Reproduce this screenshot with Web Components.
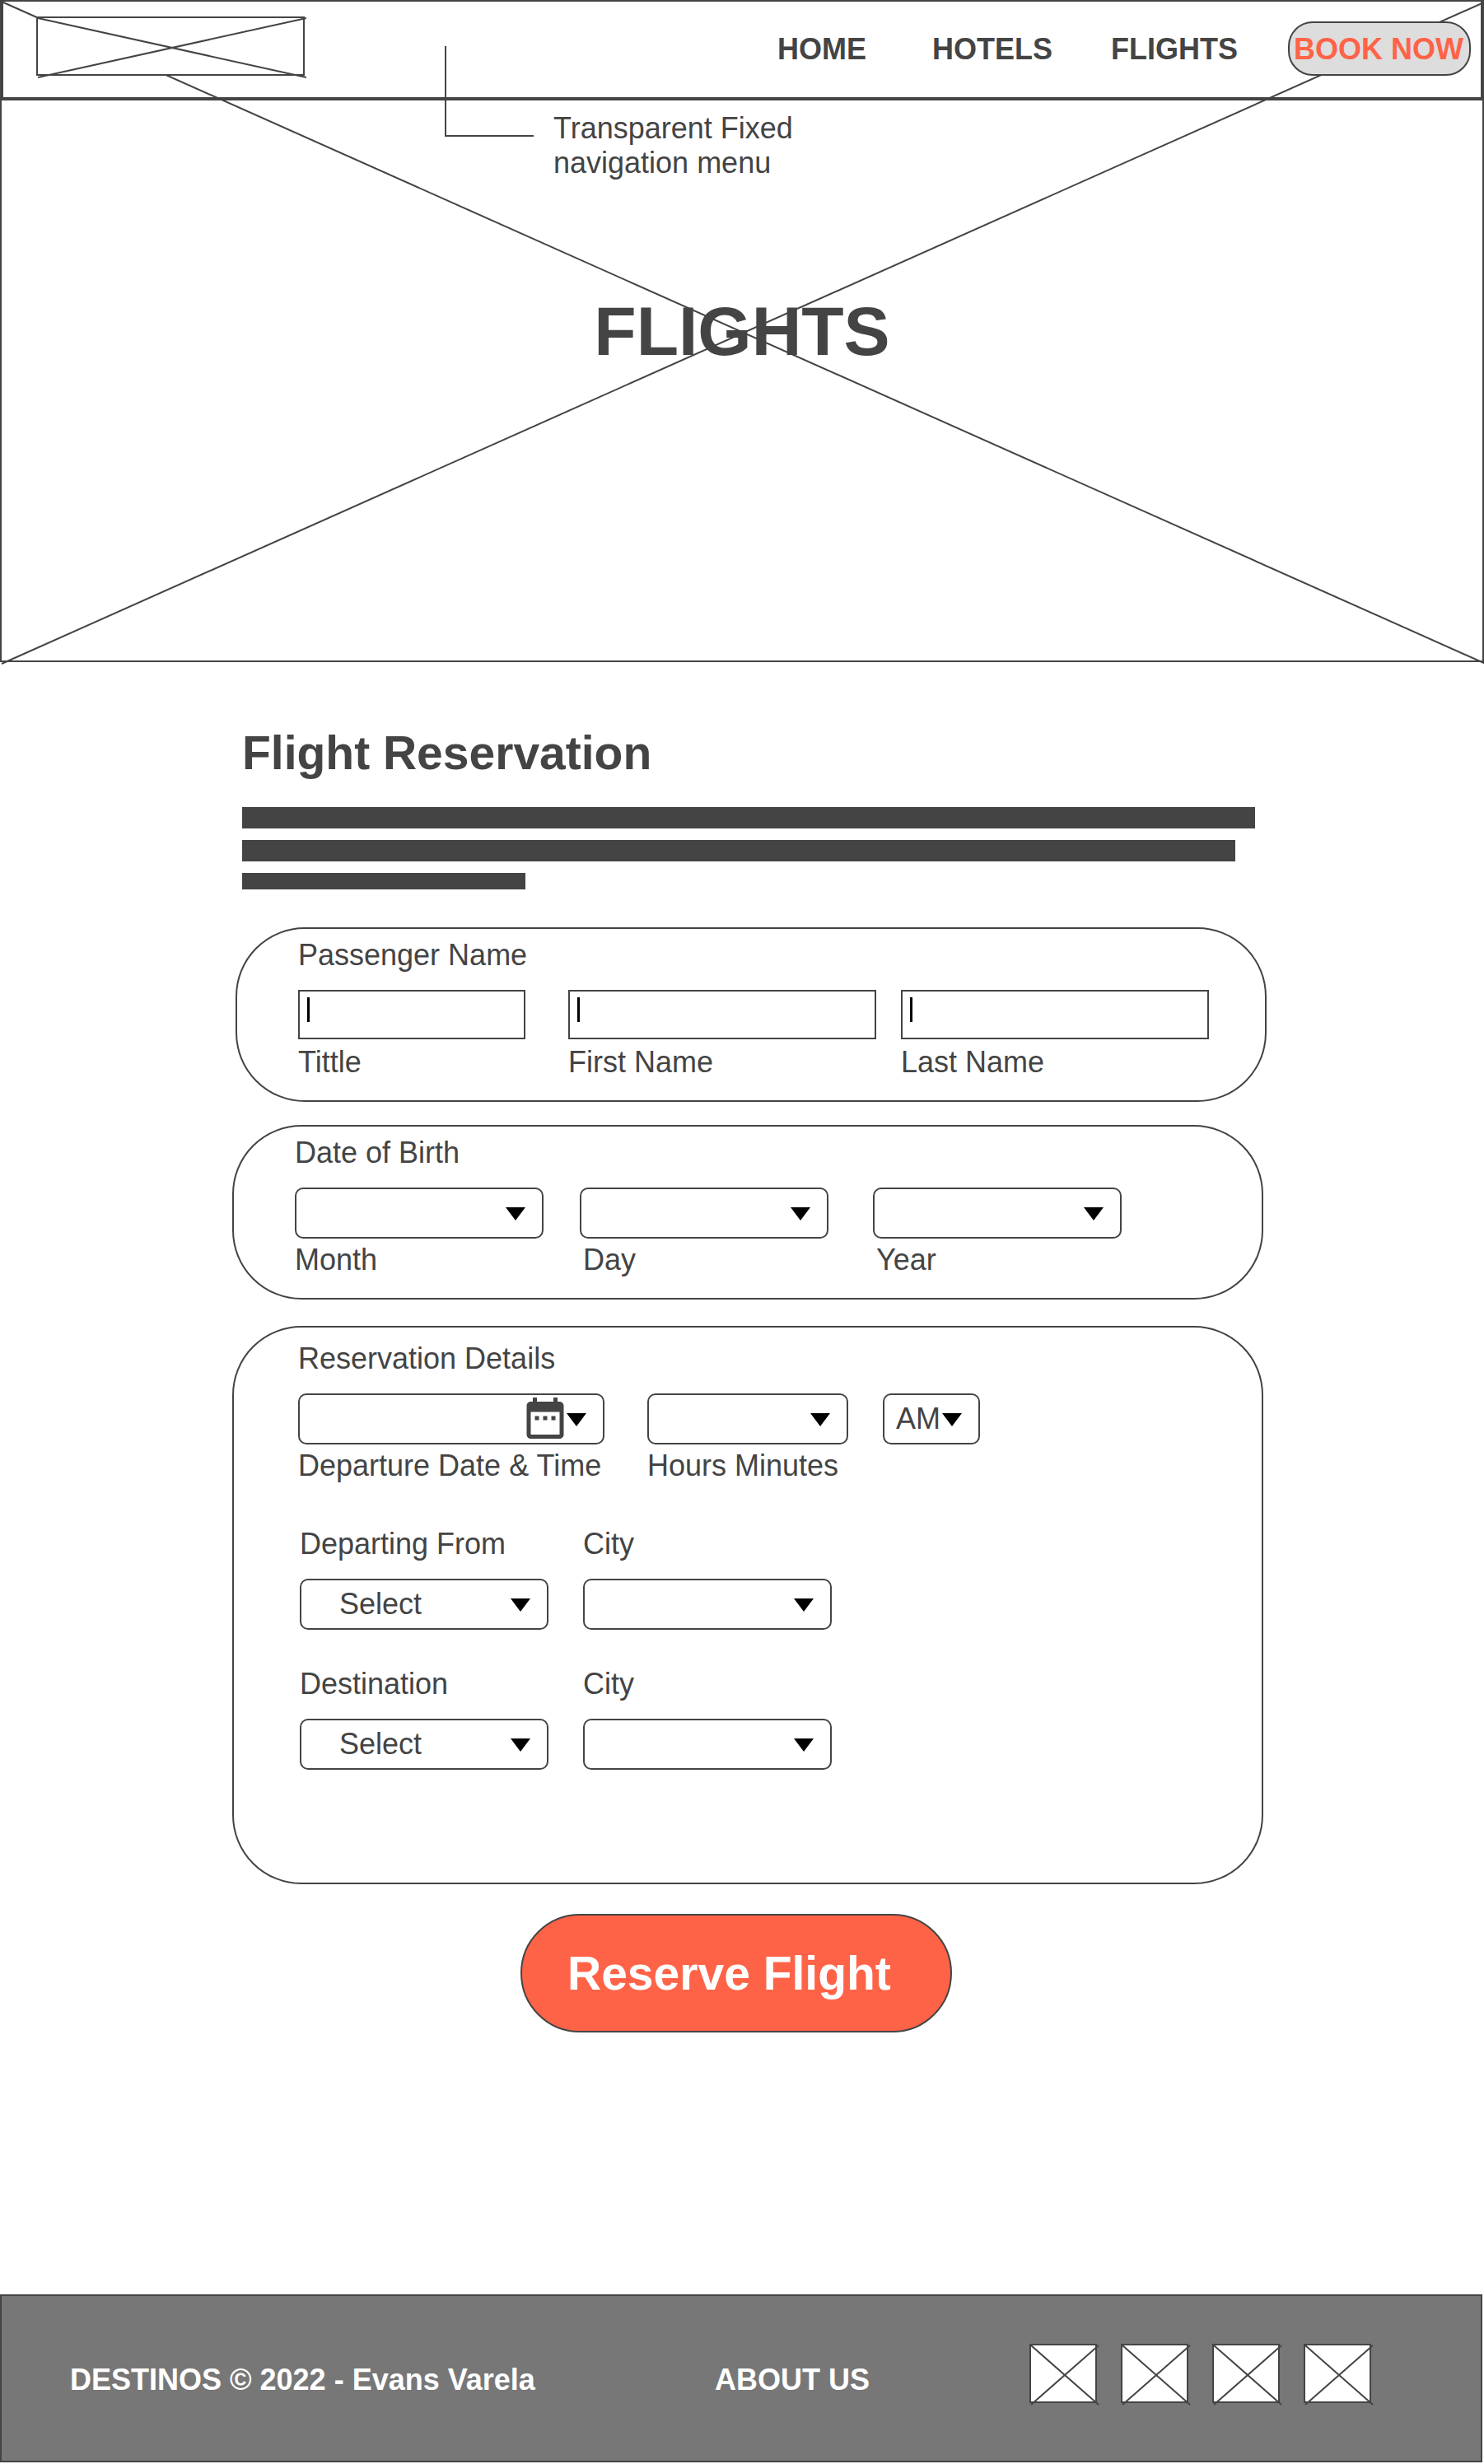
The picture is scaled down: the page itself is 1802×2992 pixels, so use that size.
<!DOCTYPE html>
<html lang="en">
<head>
<meta charset="utf-8">
<meta name="viewport" content="width=device-width, initial-scale=1">
<title>Destinos - Flights</title>
<style>
  body {
    margin: 0;
    background: #fff;
    --ink: #444;
    --accent: #ff6347;
    color: var(--ink);
    font: 36px/42px "Liberation Sans", Arial, sans-serif;
  }
</style>
</head>
<body>
<flights-page></flights-page>

<template id="t-crossed-box">
  <style>
    :host { display: block; position: relative; box-sizing: border-box; border: 2px solid var(--ink); background: var(--fill, #fff); }
    svg { position: absolute; left: 0; top: 0; width: calc(100% + 4px); height: calc(100% + 4px); overflow: visible; pointer-events: none; }
    line { stroke: var(--ink); stroke-width: 2; }
  </style>
  <svg aria-hidden="true"><line x1="0" y1="0" x2="100%" y2="100%"/><line x1="0" y1="100%" x2="100%" y2="0"/></svg>
  <slot></slot>
</template>

<template id="t-site-nav">
  <style>
    :host { display: block; }
    nav { box-sizing: border-box; height: 122px; display: flex; justify-content: space-between; align-items: center;
      border: 4px solid var(--ink); border-top-width: 2px; padding: 0 12px 2px 40px; font-weight: bold; }
    .logo { align-self: flex-start; margin-top: 18px; }
    crossed-box { width: 326px; height: 72px; }
    ul { list-style: none; margin: 0; padding: 0; display: grid; grid-template-columns: 188px 217px 215px 222px; align-items: center; }
    a { color: inherit; text-decoration: none; white-space: nowrap; }
    li a { display: block; padding-top: 2px; }
    li .book { box-sizing: border-box; display: flex; align-items: center; height: 66px; padding-left: 5px;
      border: 2px solid var(--ink); border-radius: 30px; background: #ddd; color: var(--accent); }
  </style>
  <nav aria-label="Main">
    <a class="logo" href="#" aria-label="Destinos"><crossed-box></crossed-box></a>
    <ul>
      <li><a href="#home">HOME</a></li>
      <li><a href="#hotels">HOTELS</a></li>
      <li><a href="#flights">FLIGHTS</a></li>
      <li><a class="book" href="#book">BOOK NOW</a></li>
    </ul>
  </nav>
</template>

<template id="t-call-out">
  <style>
    :host { display: flex; gap: 24px; align-items: flex-start; }
    svg { display: block; flex: none; }
    p { margin: 79px 0 0; }
  </style>
  <svg width="108" height="110" fill="none" stroke="currentColor" stroke-width="2" aria-hidden="true"><path d="M1 0V109H108"/></svg>
  <p><slot></slot></p>
</template>

<template id="t-page-hero">
  <style>
    :host { display: block; position: relative; overflow-x: clip; }
    crossed-box { height: 804px; }
    h1 { margin: 0; height: 800px; display: flex; align-items: center; justify-content: center; font-size: 84px; line-height: 96px; }
    site-nav { position: absolute; inset: 0 0 auto; }
    call-out { position: absolute; left: 540px; top: 56px; }
  </style>
  <crossed-box><h1><slot></slot></h1></crossed-box>
  <site-nav></site-nav>
  <call-out>Transparent Fixed<br>navigation menu</call-out>
</template>

<template id="t-page-intro">
  <style>
    :host { display: block; margin: 0 10px 46px 12px; }
    h2 { margin: 0 0 33px; font-size: 57px; line-height: 66px; }
    .lines { display: grid; gap: 14px; }
    .lines span { height: 26px; background: var(--ink); }
    .lines span:nth-child(2) { margin-right: 24px; }
    .lines span:nth-child(3) { height: 20px; width: 28%; }
  </style>
  <h2><slot></slot></h2>
  <div class="lines" aria-hidden="true"><span></span><span></span><span></span></div>
</template>

<template id="t-field-group">
  <style>
    :host { display: block; }
    fieldset { margin: 0; min-width: 0; border: 2px solid var(--ink); border-radius: 84px;
      padding: var(--pad-top, 11px) 20px var(--pad-bottom, 25px) var(--pad-left, 74px); }
    legend { float: left; width: 100%; padding: 0; margin-bottom: 21px; }
    .content { clear: both; }
  </style>
  <fieldset><legend></legend><div class="content"><slot></slot></div></fieldset>
</template>

<template id="t-text-field">
  <style>
    :host { display: flex; flex-direction: column; gap: 7px; max-width: var(--w); }
    input { box-sizing: border-box; width: 100%; height: 60px; margin: 0; padding: 0 12px; border: 2px solid var(--ink); border-radius: 0;
      font: inherit; color: inherit; background: #fff linear-gradient(#000, #000) no-repeat 9px 7px / 3px 30px; }
    label { white-space: nowrap; }
  </style>
  <input id="control" type="text"><label for="control"></label>
</template>

<template id="t-select-field">
  <style>
    :host { display: flex; flex-direction: column; gap: 5px; max-width: var(--w); }
    :host([label-above]) { flex-direction: column-reverse; gap: 21px; }
    .box { position: relative; }
    select { appearance: none; display: block; box-sizing: border-box; width: 100%; height: 62px; margin: 0; padding: 0 0 0 var(--inset, 46px);
      border: 2px solid var(--ink); border-radius: 10px; background: #fff; color: inherit; font: inherit; }
    .marks { position: absolute; right: 22px; top: 0; height: 62px; display: flex; pointer-events: none; }
    .arrow { display: block; margin-top: 24px; }
    .calendar { display: none; fill: var(--ink); margin-right: -4px; }
    :host([calendar]) .calendar { display: block; }
    label { white-space: nowrap; padding-left: var(--label-inset, 0); }
  </style>
  <div class="box">
    <select id="control"><option></option></select>
    <span class="marks" aria-hidden="true">
      <svg class="calendar" width="60" height="60" viewBox="0 0 24 24"><path d="M9 11H7v2h2v-2zm4 0h-2v2h2v-2zm4 0h-2v2h2v-2zm2-7h-1V2h-2v2H8V2H6v2H5c-1.110 0-1.990.9-1.990 2L3 20c0 1.100.89 2 2 2h14c1.100 0 2-.9 2-2V6c0-1.100-.9-2-2-2zm0 16H5V9h14v11z"/></svg>
      <svg class="arrow" width="24" height="16"><path d="M0 0H24L12 16Z"/></svg>
    </span>
  </div>
  <label for="control"></label>
</template>

<template id="t-reservation-form">
  <style>
    :host { display: block; }
    field-group { margin-bottom: 28px; }
    .passenger { margin-left: 4px; margin-right: -4px; }
    .birth { margin-bottom: 32px; }
    .details { --pad-top: 17px; --pad-bottom: 137px; --pad-left: 78px; margin-bottom: 36px; }
    .row { display: grid; }
    .names { grid-template-columns: 328px 404px 374px; }
    .dates { grid-template-columns: 346px 356px 302px; --w: 302px; }
    .times { grid-template-columns: 424px 286px 118px; margin-bottom: 53px; }
    .places { grid-template-columns: 344px 302px; --w: 302px; row-gap: 45px; padding-left: 2px; }
    .short { --w: 276px; }
    .long { --w: 374px; }
    .day, .year { --label-inset: 4px; }
    .date { --w: 372px; }
    .hours { --w: 244px; }
    .period { --w: 118px; --inset: 14px; }
    button { display: block; box-sizing: border-box; width: 524px; height: 144px; margin: 0 0 0 350px; padding: 0 0 0 55px; text-align: left;
      border: 2px solid var(--ink); border-radius: 72px; background: var(--accent); color: #fff; font: bold 57px/66px "Liberation Sans", Arial, sans-serif; }
  </style>
  <form>
    <field-group class="passenger" legend="Passenger Name">
      <div class="row names">
        <text-field class="short" label="Tittle"></text-field>
        <text-field class="long" label="First Name"></text-field>
        <text-field class="long" label="Last Name"></text-field>
      </div>
    </field-group>
    <field-group class="birth" legend="Date of Birth">
      <div class="row dates">
        <select-field label="Month"></select-field>
        <select-field class="day" label="Day"></select-field>
        <select-field class="year" label="Year"></select-field>
      </div>
    </field-group>
    <field-group class="details" legend="Reservation Details">
      <div class="row times">
        <select-field class="date" calendar label="Departure Date &amp; Time"></select-field>
        <select-field class="hours" label="Hours Minutes"></select-field>
        <select-field class="period" value="AM" name="AM or PM"></select-field>
      </div>
      <div class="row places">
        <select-field label-above label="Departing From" value="Select"></select-field>
        <select-field label-above label="City"></select-field>
        <select-field label-above label="Destination" value="Select"></select-field>
        <select-field label-above label="City"></select-field>
      </div>
    </field-group>
    <button type="button">Reserve Flight</button>
  </form>
</template>

<template id="t-site-footer">
  <style>
    :host { display: block; }
    footer { display: grid; grid-template-columns: 783px 1fr auto; align-items: start; margin: 0 2px 2px 0; padding: 58px 133px 70px 83px;
      border: 2px solid var(--ink); background: #777; color: #fff; font-weight: bold; }
    p { margin: 23px 0 0; }
    a { color: inherit; text-decoration: none; }
    .social { display: flex; gap: 29px; }
    crossed-box { width: 82px; height: 72px; }
  </style>
  <footer>
    <p>DESTINOS © 2022 - Evans Varela</p>
    <p><a href="#about">ABOUT US</a></p>
    <div class="social">
      <a href="#" aria-label="Social profile 1"><crossed-box></crossed-box></a>
      <a href="#" aria-label="Social profile 2"><crossed-box></crossed-box></a>
      <a href="#" aria-label="Social profile 3"><crossed-box></crossed-box></a>
      <a href="#" aria-label="Social profile 4"><crossed-box></crossed-box></a>
    </div>
  </footer>
</template>

<template id="t-flights-page">
  <style>
    :host { display: block; }
    main { padding: 77px 268px 318px 282px; }
  </style>
  <page-hero>FLIGHTS</page-hero>
  <main>
    <page-intro>Flight Reservation</page-intro>
    <reservation-form></reservation-form>
  </main>
  <site-footer></site-footer>
</template>

<script>
  class TemplateElement extends HTMLElement {
    constructor() {
      super();
      const template = document.getElementById('t-' + this.localName);
      this.attachShadow({ mode: 'open' }).append(template.content.cloneNode(true));
    }
  }

  class FieldGroup extends TemplateElement {
    connectedCallback() {
      this.shadowRoot.querySelector('legend').textContent = this.getAttribute('legend');
    }
  }

  class TextField extends TemplateElement {
    connectedCallback() {
      this.shadowRoot.querySelector('label').textContent = this.getAttribute('label');
    }
  }

  class SelectField extends TemplateElement {
    connectedCallback() {
      const label = this.shadowRoot.querySelector('label');
      if (this.hasAttribute('label')) {
        label.textContent = this.getAttribute('label');
      } else {
        label.remove();
        this.shadowRoot.querySelector('select').setAttribute('aria-label', this.getAttribute('name'));
      }
      this.shadowRoot.querySelector('option').textContent = this.getAttribute('value') || '';
    }
  }

  customElements.define('field-group', FieldGroup);
  customElements.define('text-field', TextField);
  customElements.define('select-field', SelectField);
  for (const name of ['crossed-box', 'site-nav', 'call-out', 'page-hero', 'page-intro', 'reservation-form', 'site-footer', 'flights-page']) {
    customElements.define(name, class extends TemplateElement {});
  }
</script>
</body>
</html>
